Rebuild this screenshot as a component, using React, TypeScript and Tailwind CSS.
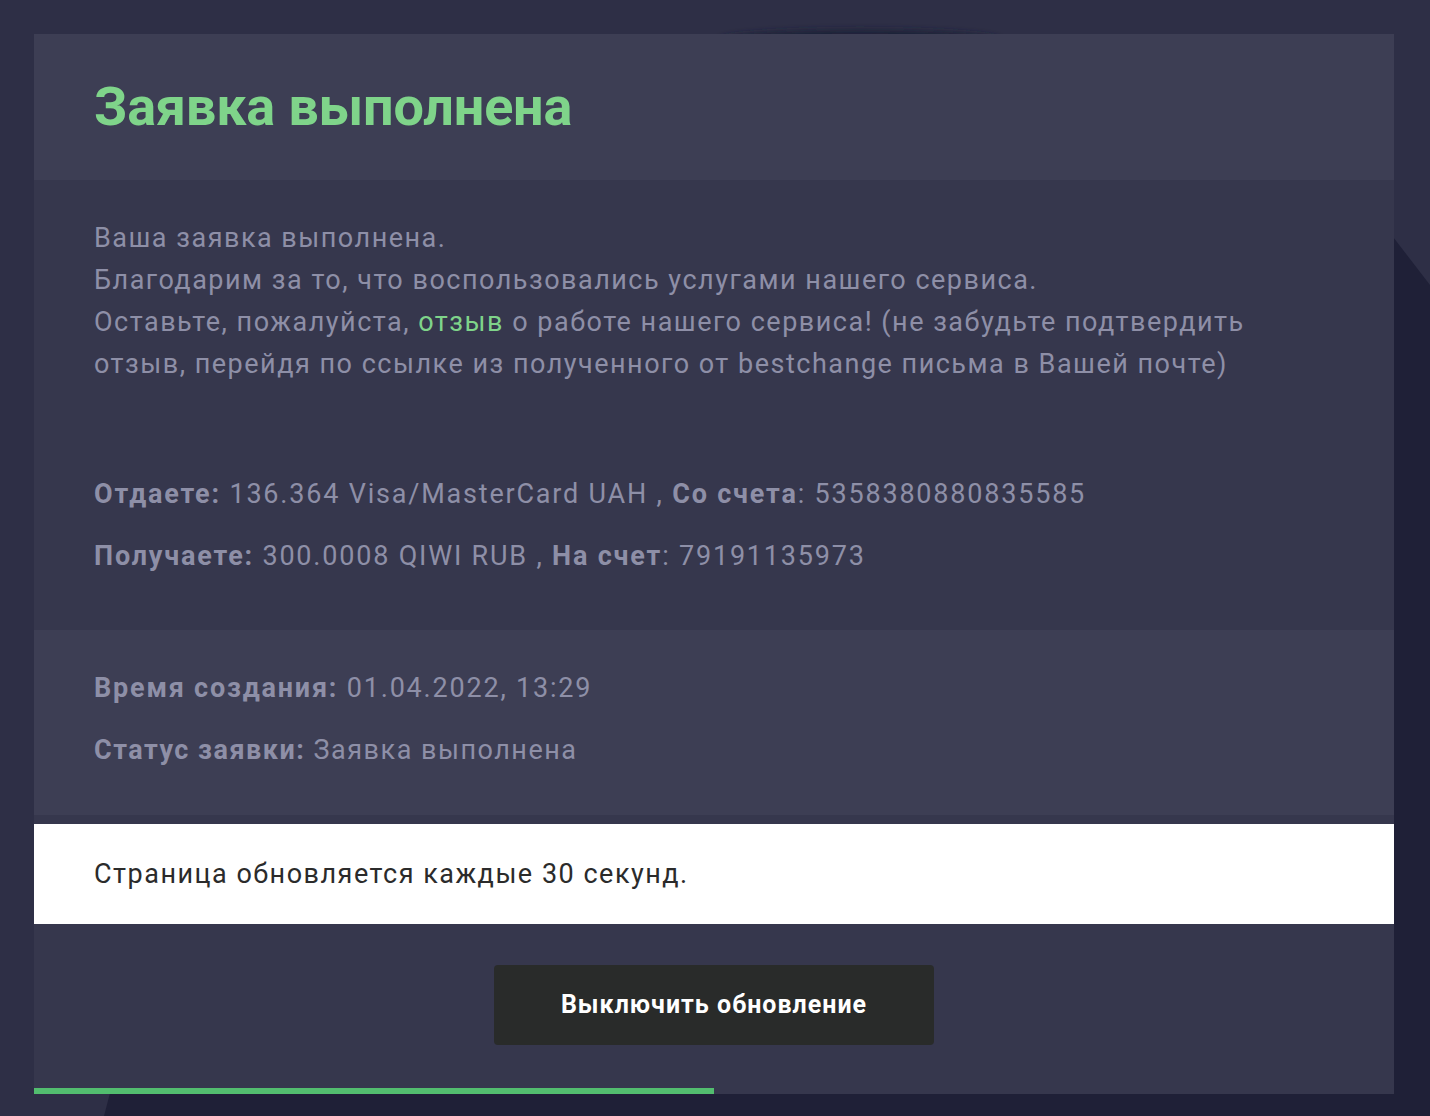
import React from "react";

const font = { fontFamily: "Roboto, 'Noto Sans', sans-serif" };

function Backdrop() {
  return (
    <svg
      className="absolute inset-0 h-full w-full"
      viewBox="0 0 1430 1116"
      preserveAspectRatio="none"
    >
      <defs>
        <filter id="soft" x="-20%" y="-200%" width="140%" height="500%">
          <feGaussianBlur stdDeviation="3" />
        </filter>
      </defs>
      <ellipse cx="860" cy="40" rx="140" ry="10" fill="#1f2037" filter="url(#soft)" />
      <polygon
        points="1380,220 1430,285 1430,1116 104,1116 116,1070 1380,1070"
        fill="#1f2037"
      />
    </svg>
  );
}

function Row({ label, children, className = "" }: { label: string; children: React.ReactNode; className?: string }) {
  return (
    <p className={"leading-[42px] " + className}>
      <b className="font-bold">{label}</b> {children}
    </p>
  );
}

export default function App() {
  return (
    <div className="relative h-[1116px] w-[1430px] overflow-hidden bg-[#2e2f46]" style={font}>
      <Backdrop />
      <div className="relative px-[34px] pt-[34px]">
        <div className="w-[1360px] text-[27px] tracking-[1.5px] text-[#8e8fa7]">
          <header className="flex h-[146px] items-center bg-[#3d3e54] px-[60px]">
            <h1 className="text-[54px] font-bold leading-none tracking-[-0.2px] text-[#7fd48a]">Заявка выполнена</h1>
          </header>

          <section className="bg-[#36374d] px-[60px] pb-[53px] pt-[37px]">
            <p className="leading-[42px]">
              Ваша заявка выполнена.
              <br />
              Благодарим за то, что воспользовались услугами нашего сервиса.
              <br />
              Оставьте, пожалуйста, <a className="text-[#7fd48a]">отзыв</a> о работе нашего сервиса! (не забудьте
              подтвердить отзыв, перейдя по ссылке из полученного от bestchange письма в Вашей почте)
            </p>
            <Row label="Отдаете:" className="mt-[88px] tracking-[1.8px]">
              136.364 Visa/MasterCard UAH , <b className="font-bold">Со счета</b>: 5358380880835585
            </Row>
            <Row label="Получаете:" className="mt-[20px] tracking-[1.8px]">
              300.0008 QIWI RUB , <b className="font-bold">На счет</b>: 79191135973
            </Row>
          </section>

          <section className="border-b-[9px] border-[#36374d] bg-[#3d3e54] px-[60px] pb-[44px] pt-[37px]">
            <Row label="Время создания:" className="tracking-[1.8px]">01.04.2022, 13:29</Row>
            <Row label="Статус заявки:" className="mt-[20px]">
              Заявка выполнена
            </Row>
          </section>

          <div className="flex h-[100px] items-center bg-white px-[60px] text-[#2b2b2b]">
            Страница обновляется каждые 30 секунд.
          </div>

          <div className="flex h-[170px] flex-col bg-[#36374d]">
            <div className="flex justify-center pt-[41px]">
              <button className="h-[80px] w-[440px] rounded-[4px] bg-[#292b2a] text-[25px] font-bold tracking-[1px] text-white">
                Выключить обновление
              </button>
            </div>
            <div className="mt-auto h-[6px] w-[680px] bg-[#52bd6f]" />
          </div>
        </div>
      </div>
    </div>
  );
}
